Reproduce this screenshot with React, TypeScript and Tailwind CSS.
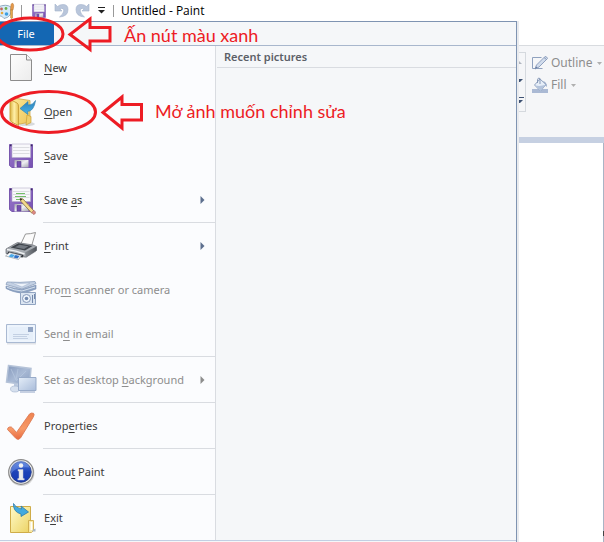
import type { ReactNode } from 'react';

const FloppyIcon = ({ className, pencil = false }: { className: string; pencil?: boolean }) => (
  <svg viewBox="0 0 32 32" className={className} aria-hidden="true">
    <defs>
      <linearGradient id="floppyBody" x1="0" y1="0" x2="1" y2="1">
        <stop offset="0" stopColor="#9a7acb" />
        <stop offset="1" stopColor="#7650b2" />
      </linearGradient>
      <linearGradient id="floppyShutter" x1="0" y1="0" x2="1" y2="1">
        <stop offset="0" stopColor="#a5a5b0" />
        <stop offset="0.5" stopColor="#f0f0f3" />
        <stop offset="1" stopColor="#a5a5b0" />
      </linearGradient>
    </defs>
    <path d="M4.5 4.5h23v23H7l-2.500-2z" fill="url(#floppyBody)" stroke="#7857ae" />
    <path d="M7 4h18.500v13.500H7z" fill="#f8f8fb" stroke="#b5aecb" strokeWidth="0.6" />
    <path d="M8 7.500h16.500M8 10.500h16.500M8 13.500h16.500" stroke="#dcdde1" />
    <path d="M9.500 20h14v7.500h-14z" fill="url(#floppyShutter)" />
    <path d="M12 21.500h4v5.500h-4z" fill="#7650b2" stroke="#57398f" strokeWidth="0.600" />
    <path d="M5 5.500h1.500M25.800 5.500h1.500" stroke="#3a2a60" strokeWidth="1.500" />
    {pencil && (
      <>
        <path d="M11 9.500h9M10 12.500h11M11 15.500h5" stroke="#73bd69" strokeWidth="1.200" />
        <path d="M15 14.500l3 0.500 11 12-2.200 2.200L16 17.500z" fill="#f3d98a" stroke="#85703f" strokeWidth="0.800" />
        <path d="M15 14.500l2.500 0.500-2 1.800z" fill="#222" />
        <path d="M26.800 28.500l2-2.300 1.700 1.800q0.300 2.300-2 2.500z" fill="#e08a84" stroke="#a3645e" strokeWidth="0.600" />
      </>
    )}
  </svg>
);

const NewIcon = () => (
  <svg viewBox="0 0 32 32" className="size-8" aria-hidden="true">
    <defs>
      <linearGradient id="paper" x1="0" y1="0" x2="1" y2="1">
        <stop offset="0" stopColor="#fdfdfd" />
        <stop offset="1" stopColor="#ececec" />
      </linearGradient>
    </defs>
    <path d="M5.500 2.500h16l5 5.500v20.500h-21z" fill="url(#paper)" stroke="#8c8c8c" strokeLinejoin="round" />
    <path d="M21.500 2.500v5.500h5" fill="#f4f4f4" stroke="#8c8c8c" strokeLinejoin="round" />
  </svg>
);

const OpenIcon = () => (
  <svg viewBox="0 0 32 32" className="size-8" aria-hidden="true">
    <defs>
      <linearGradient id="folderFront" x1="0" y1="0" x2="1" y2="0">
        <stop offset="0" stopColor="#d9b23f" />
        <stop offset="0.5" stopColor="#fff0a8" />
        <stop offset="1" stopColor="#e6c055" />
      </linearGradient>
      <linearGradient id="folderInside" x1="0" y1="0" x2="1" y2="1">
        <stop offset="0" stopColor="#fbe796" />
        <stop offset="1" stopColor="#eec75c" />
      </linearGradient>
      <linearGradient id="arrowBlue" x1="0" y1="0" x2="0" y2="1">
        <stop offset="0" stopColor="#2f7fb8" />
        <stop offset="1" stopColor="#45b5ea" />
      </linearGradient>
    </defs>
    <ellipse cx="21" cy="28" rx="9" ry="2" fill="#d7dadd" />
    <path d="M7 4l5-1.500 13 2V26l-10 2-8-2z" fill="url(#folderInside)" stroke="#d0a848" strokeWidth="0.800" />
    <path d="M5 3.500l7 3.500q1.500 1 1.500 3v19.500L6.500 26Q5 25 5 23z" fill="url(#folderFront)" stroke="#c99d36" strokeWidth="0.900" />
    <path d="M22 19l4 1.500v6L21 29z" fill="#f0cf6a" stroke="#c99d36" strokeWidth="0.700" />
    <path d="M30.500 4.500q-1.500 10.500-8 11l0.500 3-8-6 8-7v3.500Q28 9 30.500 4.500z" fill="url(#arrowBlue)" stroke="#3184b4" strokeWidth="0.700" />
  </svg>
);

const PrintIcon = () => (
  <svg viewBox="0 0 32 32" className="size-8" aria-hidden="true">
    <defs>
      <linearGradient id="printerSide" x1="0" y1="0" x2="1" y2="0">
        <stop offset="0" stopColor="#8b9096" />
        <stop offset="1" stopColor="#50555c" />
      </linearGradient>
    </defs>
    <path d="M1 23l30-6v5l-10 6-18-1z" fill="#d9dbde" />
    <path d="M16 13.500l4.500-9.500q5 0 10-1.500L26 18z" fill="#fbfbfb" stroke="#8b8b8b" strokeWidth="0.900" />
    <path d="M1 19q5-3 11.500-6.500L28 15l3.500 1.500v4L21 27 1 23.500z" fill="#a6abb1" stroke="#686c72" strokeWidth="0.700" />
    <path d="M5.500 17.500l8-4.300L27.500 16 20 20.500z" fill="#3f444b" />
    <path d="M10 17.300l4.500-2.500 9 1.500-4.500 2.700z" fill="#727880" />
    <path d="M2 19.500q9 1 17.500 4.500" fill="none" stroke="#eef0f2" strokeWidth="1.400" />
    <path d="M20 22.500l11.500-6v4L21 27.500z" fill="url(#printerSide)" />
    <path d="M3.500 21.500l15 3.500-1 2.500L2 24z" fill="#2c3036" />
    <path d="M4.500 22.500l12 3-3 4-13-3.500z" fill="#f3f7fb" stroke="#8b8f94" strokeWidth="0.600" />
    <path d="M6 24l4 1-2.500 2.500-4-1z" fill="#4aa9e8" />
    <path d="M10.500 25l4 1-2 2.500-4-1z" fill="#2f6fc4" />
  </svg>
);

const ScannerIcon = () => (
  <svg viewBox="0 0 32 32" className="size-8" aria-hidden="true">
    <path d="M2 8q12 1 28-0.500l1 2-14 5.500L1 10.500z" fill="#c4d1e4" stroke="#8c9fbd" strokeWidth="0.800" />
    <path d="M6 8.500q8 1.500 19 0.500l-8 4z" fill="#eef3fa" stroke="#9badc8" strokeWidth="0.500" />
    <path d="M1 12q7 2 16 3.500L31 11v4l-13 4.500Q7 18 1 14.500z" fill="#8ea3c2" stroke="#7c92b5" strokeWidth="0.600" />
    <path d="M2 13.300q7 3 15 3.700l13-4" fill="none" stroke="#dce6f2" strokeWidth="0.900" />
    <path d="M15.500 18.500h15v12h-15z" fill="#dbe5f1" stroke="#91a4c1" />
    <path d="M17 17.500h4v1.500h-4z" fill="#91a4c1" />
    <circle cx="21.500" cy="24.500" r="4" fill="#eef4fb" stroke="#8799b9" />
    <circle cx="21.500" cy="24.500" r="1.800" fill="#7289ae" />
    <path d="M27.500 21v8M29.500 20v5" stroke="#7388aa" />
  </svg>
);

const EmailIcon = () => (
  <svg viewBox="0 0 32 32" className="size-8" aria-hidden="true">
    <path d="M2 25.500h29" stroke="#e0e3e8" strokeWidth="2" />
    <path d="M1.500 6.500h29v18h-29z" fill="#e6effa" stroke="#a9b9d2" />
    <path d="M3 8h26v15H3z" fill="none" stroke="#f4f9ff" />
    <path d="M23 9h5v5h-5z" fill="#92a5c4" />
    <path d="M8 16.500h16M8 18.500h14M8 20.500h15" stroke="#bac8dd" strokeWidth="0.800" />
  </svg>
);

const DesktopIcon = () => (
  <svg viewBox="0 0 32 32" className="size-8" aria-hidden="true">
    <defs>
      <linearGradient id="screen" x1="0" y1="0" x2="1" y2="1">
        <stop offset="0" stopColor="#8498bb" />
        <stop offset="0.5" stopColor="#a9bad5" />
        <stop offset="1" stopColor="#869bbe" />
      </linearGradient>
      <linearGradient id="screenLight" x1="0" y1="0" x2="1" y2="1">
        <stop offset="0" stopColor="#e4edf8" />
        <stop offset="1" stopColor="#a9bcda" />
      </linearGradient>
    </defs>
    <path d="M3.500 1.500l22.500 3-1.500 17L1.500 18z" fill="url(#screen)" stroke="#b5c3d8" strokeWidth="1.500" />
    <path d="M6 5l5 11M13 5l-2 11M21 7L11 17" stroke="#b8c8df" strokeWidth="0.700" />
    <path d="M9 19.500l5 1v4H9z" fill="#bac8de" />
    <ellipse cx="10" cy="25" rx="4.500" ry="3" fill="#d6e0ee" stroke="#a9b9d1" strokeWidth="0.700" />
    <path d="M13.500 13.500h17.500v13H13.500z" fill="url(#screenLight)" stroke="#98abc9" />
    <path d="M15 28h15" stroke="#b4c2d8" strokeWidth="1.500" />
  </svg>
);

const CheckIcon = () => (
  <svg viewBox="0 0 32 32" className="size-8" aria-hidden="true">
    <defs>
      <linearGradient id="tick" x1="0" y1="0" x2="0" y2="1">
        <stop offset="0" stopColor="#ef8350" />
        <stop offset="0.600" stopColor="#f79a68" />
        <stop offset="1" stopColor="#e8693f" />
      </linearGradient>
    </defs>
    <path
      d="M2.500 19.500q0-2 2-2.500t3 1l4 4.500L24.500 4q1.500-1.500 4-0.700 1.500 1-0.500 4.200L15.500 28q-2 2.500-4.500 0.500z"
      fill="url(#tick)"
      stroke="#dc7a55"
      strokeWidth="0.900"
    />
  </svg>
);

const InfoIcon = () => (
  <svg viewBox="0 0 32 32" className="size-8" aria-hidden="true">
    <defs>
      <linearGradient id="infoBlue" x1="0" y1="0" x2="0" y2="1">
        <stop offset="0" stopColor="#4876da" />
        <stop offset="0.5" stopColor="#1e43b8" />
        <stop offset="1" stopColor="#1438b4" />
      </linearGradient>
    </defs>
    <circle cx="16.500" cy="17" r="13" fill="#d5d5d5" />
    <circle cx="16" cy="16" r="12.300" fill="#efefef" stroke="#8a8a8a" strokeWidth="1.200" />
    <circle cx="16" cy="16" r="10.300" fill="url(#infoBlue)" stroke="#273b7d" strokeWidth="0.800" />
    <path d="M6 18Q10 10 25 11.500A10 10 0 0 0 6 18z" fill="#84a4ed" opacity="0.450" />
    <circle cx="16" cy="9.500" r="2.200" fill="#f2f2f2" />
    <path d="M13 13.500h5v9h1.200V24H12.800v-1.500H14V15h-1z" fill="#ededed" stroke="#c3c7d5" strokeWidth="0.500" />
  </svg>
);

const ExitIcon = () => (
  <svg viewBox="0 0 32 32" className="size-8" aria-hidden="true">
    <defs>
      <linearGradient id="exitFolder" x1="0" y1="0" x2="1" y2="1">
        <stop offset="0" stopColor="#fffbc9" />
        <stop offset="1" stopColor="#ecd262" />
      </linearGradient>
    </defs>
    <path d="M5.500 4.500h20v26h-20z" fill="url(#exitFolder)" stroke="#cfac49" />
    <path d="M23.500 18.500h5v10l-2 2h-3z" fill="#f8e8a5" stroke="#cfac49" strokeWidth="0.900" />
    <path d="M25.500 20h1.800v8h-1.800z" fill="#fff" />
    <path d="M27.500 28l3-1.500v3h-3z" fill="#a9b5c4" />
    <path d="M8.500 1.500q2 4.500 8 5.500l-0.500-3 7.500 6-7.500 4.500V12Q8 10 8.500 1.500z" fill="#42aae0" stroke="#2c7bab" strokeWidth="0.800" />
  </svg>
);

const PaletteIcon = () => (
  <svg viewBox="0 0 16 18" className="h-[18px] w-4" aria-hidden="true">
    <path d="M-2 5q8-3.500 13 0 1.500 4-1 8-2 3-6 3.500-1.500-3-6-3z" fill="#d5eaf8" stroke="#7f9bb3" strokeWidth="0.800" />
    <circle cx="1.500" cy="7" r="1.400" fill="#c4665a" />
    <circle cx="6" cy="6.500" r="1.400" fill="#6db14a" />
    <circle cx="6.500" cy="12" r="1.800" fill="#3d9fe2" />
    <circle cx="2" cy="11" r="1.300" fill="#e6a83d" />
    <path d="M11 2.500q1-2 2-1 1.500 1.500 0 6.500h-2.500z" fill="#e69a4a" stroke="#b87a3c" strokeWidth="0.500" />
    <path d="M10.500 8h2v8q-1 1.500-1.800 0z" fill="#e8ac4d" stroke="#aa742f" strokeWidth="0.500" />
  </svg>
);

const UndoIcon = ({ className = '' }: { className?: string }) => (
  <svg viewBox="0 0 15 15" className={`size-[15px] ${className}`} aria-hidden="true">
    <path d="M1 1v7h7L5.800 5.800Q10 4.500 9.800 8 9.500 11 5.500 14q8.500-0.500 8.500-7.500 0-5-5-5Q5.500 1.500 3.500 3.500z" fill="#b9c6db" stroke="#a3b2cb" strokeWidth="0.600" />
  </svg>
);

const PencilIcon = () => (
  <svg viewBox="0 0 16 16" className="size-4" aria-hidden="true">
    <path d="M9.500 2.500h-9v11h10" fill="none" stroke="#8fa1be" />
    <path d="M3 14l1.500-4L13 1.500q2 0 2.500 2L7 12z" fill="#d1dcec" stroke="#8799b9" strokeWidth="0.900" />
    <path d="M3 14l1-2.500 1.500 1z" fill="#667b9f" />
    <path d="M12 2.500l2.500 2" stroke="#8799b9" />
  </svg>
);

const BucketIcon = () => (
  <svg viewBox="0 0 16 16" className="size-4" aria-hidden="true">
    <path d="M0 12h16v4H0z" fill="#aab9d4" />
    <path d="M8 2l6 5.500-5.500 6.500L2.500 8z" fill="#e6eef8" stroke="#8fa1be" />
    <path d="M2.500 8q5 2 11.500-0.500L8.500 14z" fill="#b4c4dc" />
    <path d="M8 7V1.500Q6 0 5.500 3v3" fill="none" stroke="#8799b9" />
    <path d="M11 4q4 1 4 6-2-1-2-3z" fill="#9aacc9" />
  </svg>
);

type MenuEntry = {
  // label split around its access key
  label: [string, string, string];
  icon: ReactNode;
  submenu?: boolean;
  disabled?: boolean;
  separator?: boolean;
};

const menuEntries: MenuEntry[] = [
  { label: ['', 'N', 'ew'], icon: <NewIcon /> },
  { label: ['', 'O', 'pen'], icon: <OpenIcon /> },
  { label: ['', 'S', 'ave'], icon: <FloppyIcon className="size-8" /> },
  { label: ['Save ', 'a', 's'], icon: <FloppyIcon className="size-8" pencil />, submenu: true, separator: true },
  { label: ['', 'P', 'rint'], icon: <PrintIcon />, submenu: true },
  { label: ['Fro', 'm', ' scanner or camera'], icon: <ScannerIcon />, disabled: true },
  { label: ['Sen', 'd', ' in email'], icon: <EmailIcon />, disabled: true, separator: true },
  { label: ['Set as desktop ', 'b', 'ackground'], icon: <DesktopIcon />, submenu: true, disabled: true, separator: true },
  { label: ['Prop', 'e', 'rties'], icon: <CheckIcon />, separator: true },
  { label: ['Abou', 't', ' Paint'], icon: <InfoIcon />, separator: true },
  { label: ['E', 'x', 'it'], icon: <ExitIcon /> },
];

const MenuItem = ({ label, icon, submenu, disabled, separator }: MenuEntry) => (
  <li>
    <button
      type="button"
      disabled={disabled}
      className="flex h-11 w-full items-center gap-[7px] pr-[10px] pl-[5px] text-left text-[#3b3b3b] disabled:text-[#8d8d8d]"
    >
      {icon}
      <span className="flex-1 whitespace-nowrap">
        {label[0]}
        <span className="underline underline-offset-2">{label[1]}</span>
        {label[2]}
      </span>
      {submenu && (
        <svg viewBox="0 0 5 8" className="h-2 w-[5px] shrink-0" aria-hidden="true">
          <path d="M0.500 0v8L4.500 4z" fill={disabled ? '#8d8d8d' : '#5d6f8e'} />
        </svg>
      )}
    </button>
    {separator && <div className="mb-px ml-[43px] h-px bg-[#d9dce1]" />}
  </li>
);

const TitleBar = () => (
  <header className="flex h-[21px] items-center bg-white">
    <PaletteIcon />
    <div className="ml-[5px] h-3 w-px bg-[#999]" />
    <button type="button" aria-label="Save" className="ml-[8px]">
      <FloppyIcon className="size-[18px]" />
    </button>
    <button type="button" aria-label="Undo" className="ml-[6px]">
      <UndoIcon />
    </button>
    <button type="button" aria-label="Redo" className="ml-[6px]">
      <UndoIcon className="-scale-x-100" />
    </button>
    <button type="button" aria-label="Customize Quick Access Toolbar" className="ml-[8px]">
      <svg viewBox="0 0 7 7" className="size-[7px]" aria-hidden="true">
        <path d="M0 0.500h7" stroke="#222" />
        <path d="M0 3h7L3.500 6.500z" fill="#222" />
      </svg>
    </button>
    <div className="ml-[8px] h-3 w-px bg-[#999]" />
    <h1 className="ml-[7px] font-['Open_Sans',sans-serif] text-[12px] whitespace-nowrap text-black">Untitled - Paint</h1>
  </header>
);

const RibbonButton = ({ icon, label }: { icon: ReactNode; label: string }) => (
  <button type="button" disabled className="flex h-[22px] items-center gap-[3px] text-[#8d8d8d]">
    {icon}
    {label}
    <svg viewBox="0 0 5 3" className="ml-px h-[3px] w-[5px]" aria-hidden="true">
      <path d="M0 0h5L2.500 3z" fill="#b0b0b0" />
    </svg>
  </button>
);

const Ribbon = () => (
  <div className="flex w-[87px] shrink-0 flex-col border-l-2 border-[#e9ebee] bg-white pt-[24px]">
    <div className="flex h-[92px] items-start border-t border-[#d8dbdf] bg-[#f5f6f8] pt-[6px]">
      <div className="flex h-[60px] w-[7px] flex-col justify-around border border-l-0 border-[#d5d9de]">
        <svg viewBox="0 0 4 3" className="h-[3px] w-1" aria-hidden="true">
          <path d="M0 0l3 3H0z" fill="#b0b5bf" />
        </svg>
        <svg viewBox="0 0 4 3" className="h-[3px] w-1" aria-hidden="true">
          <path d="M0 0h4L1 3H0z" fill="#3e5273" />
        </svg>
        <svg viewBox="0 0 5 6" className="h-[6px] w-[5px]" aria-hidden="true">
          <path d="M0 0.500h5" stroke="#3e5273" />
          <path d="M0 3h4L1 6H0z" fill="#3e5273" />
        </svg>
      </div>
      <div className="ml-[6px] text-[12px]">
        <RibbonButton icon={<PencilIcon />} label="Outline" />
        <RibbonButton icon={<BucketIcon />} label="Fill" />
      </div>
    </div>
    <div className="h-[6px] bg-[#c6d0e2]" />
    {/* canvas edge with its resize handle */}
    <div className="flex flex-1 flex-col items-end pb-[6px] shadow-[inset_-1px_0_0_#a9b4c5]">
      <div className="mt-auto h-[5px] w-px bg-[#444]" />
    </div>
  </div>
);

const Annotations = () => (
  <div className="pointer-events-none absolute inset-0 font-[Lato,sans-serif] text-[18px] leading-6 text-[#ed1c24]">
    <svg viewBox="0 0 150 140" className="absolute top-0 left-0 h-[140px] w-[150px]" fill="none" stroke="#ed1c24" strokeWidth="3" aria-hidden="true">
      <ellipse cx="30" cy="34" rx="33" ry="16" />
      <ellipse cx="48.500" cy="112" rx="47" ry="20.500" />
      <path d="M70 34.500l20-15.500v8.500h20V41H90v8.500z" />
      <path d="M103 112.500l19-15.500v7.500h19.500V120H122v8z" />
    </svg>
    <p className="absolute top-[23px] left-[124px] whitespace-nowrap">Ấn nút màu xanh</p>
    <p className="absolute top-[99px] left-[155px] whitespace-nowrap">Mở ảnh muốn chỉnh sửa</p>
  </div>
);

const App = () => (
  <div className="relative flex min-h-screen flex-col overflow-hidden bg-white font-['Noto_Sans',sans-serif] text-[11px]">
    <TitleBar />
    <main className="flex flex-1">
      <div className="flex flex-1 flex-col border-t border-r border-[#7f94b2] bg-[#f5f7f9]">
        <div className="flex h-6 border-b border-[#a8b7cd]">
          <button type="button" className="w-[54px] bg-[#1467b3] pt-px pr-[2px] text-white">
            File
          </button>
        </div>
        <div className="flex">
          <nav className="w-[216px] border-r border-[#d9dce1] bg-[#fbfcfe]">
            <ul>
              {menuEntries.map((entry) => (
                <MenuItem key={entry.label.join('')} {...entry} />
              ))}
            </ul>
          </nav>
          <section className="ml-px flex-1">
            <h2 className="h-[22px] border-b border-[#d9dce1] px-[7px] leading-[21px] font-semibold text-[#5c6068]">
              Recent pictures
            </h2>
          </section>
        </div>
        <div className="h-px bg-[#c2cfe3]" />
      </div>
      <Ribbon />
    </main>
    <Annotations />
  </div>
);

export default App;
